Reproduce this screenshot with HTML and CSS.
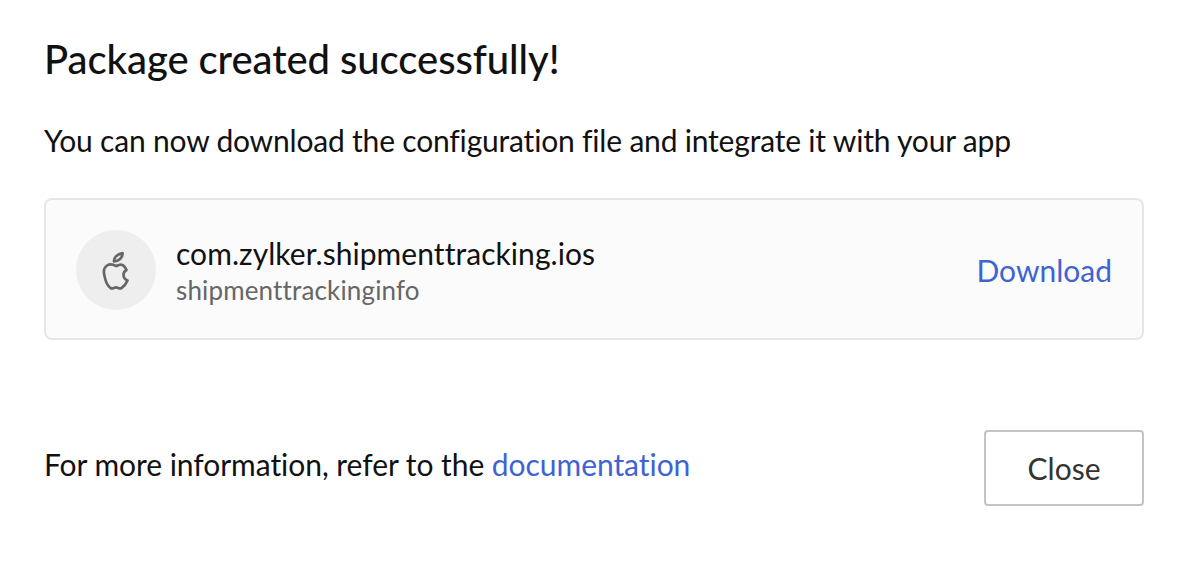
FILE: index.html
```html
<!DOCTYPE html>
<html lang="en">
<head>
<meta charset="utf-8">
<title>Package created</title>
<link rel="stylesheet" href="styles.css">
</head>
<body>
<main class="dialog">
  <h1 class="title">Package created successfully!</h1>
  <p class="lead">You can now download the configuration file and integrate it with your app</p>
  <section class="card">
    <div class="avatar">
      <svg class="apple" viewBox="0 0 28 40" width="28" height="40" fill="none" stroke="#666" stroke-width="2.7" stroke-linejoin="round" stroke-linecap="round">
        <path d="M14 16C11.500 14.500 8 13.500 5 15.500 2 17.500 1.500 22 2.500 26 3.500 31 5.500 36 8.500 38 10.500 39.200 12 37.400 14 37.400S17.500 39.200 19.500 38C22 36.400 24.500 33 25.500 30.500 23 29.500 21.500 27.300 21.500 24.800 21.500 22.800 22.600 21 24.500 20 22.800 16.200 20 14.200 17.500 14.800 16 15.100 15.200 16 14 16Z"/>
        <path d="M12 11.500C11.500 8 15 4 20.500 3.200 21 7 17 11.500 12 11.500Z"/>
      </svg>
    </div>
    <div class="info">
      <div class="pkg">com.zylker.shipmenttracking.ios</div>
      <div class="sub">shipmenttrackinginfo</div>
    </div>
    <a class="link download" href="#">Download</a>
  </section>
  <footer class="foot">
    <p class="more">For more information, refer to the <a class="link" href="#">documentation</a></p>
    <button class="close" type="button">Close</button>
  </footer>
</main>
</body>
</html>
```
FILE: styles.css
```css
* { box-sizing: border-box; }
html, body { margin: 0; padding: 0; background: #fff; }
body { width: 1186px; height: 570px; overflow: hidden; font-family: Lato, sans-serif; color: #111; font-variant-ligatures: none; }
.dialog { padding: 36px 42px 0 44px; display: flex; flex-direction: column; }
.title { margin: 0; font-size: 40px; line-height: 46px; font-weight: 500; letter-spacing: -0.07px; }
.lead { margin: 38px 0 0; font-size: 30px; line-height: 40px; letter-spacing: -0.19px; }
.card { margin-top: 38px; height: 142px; border: 2px solid #e6e6e9; border-radius: 8px; background: #fbfbfb; display: flex; align-items: center; padding: 0 30px; }
.avatar { width: 80px; height: 80px; margin-top: 2px; border-radius: 50%; background: #eee; display: flex; align-items: center; justify-content: center; flex: none; }
.info { margin-left: 20px; flex: 1; padding-top: 3px; }
.pkg { font-size: 30px; line-height: 38px; letter-spacing: 0.06px; }
.sub { font-size: 26px; line-height: 36px; color: #666; letter-spacing: 0.15px; }
.link { color: #3f63d2; text-decoration: none; }
.download { font-size: 30px; margin-top: 1px; }
.foot { margin-top: 90px; display: flex; justify-content: space-between; align-items: center; }
.more { margin: 0 0 8px; font-size: 30px; line-height: 40px; letter-spacing: -0.05px; }
.close { width: 160px; height: 76px; background: #fff; border: 2px solid #c4c4c4; border-radius: 4px; font: 30px Lato, sans-serif; font-variant-ligatures: none; color: #333; }
```
